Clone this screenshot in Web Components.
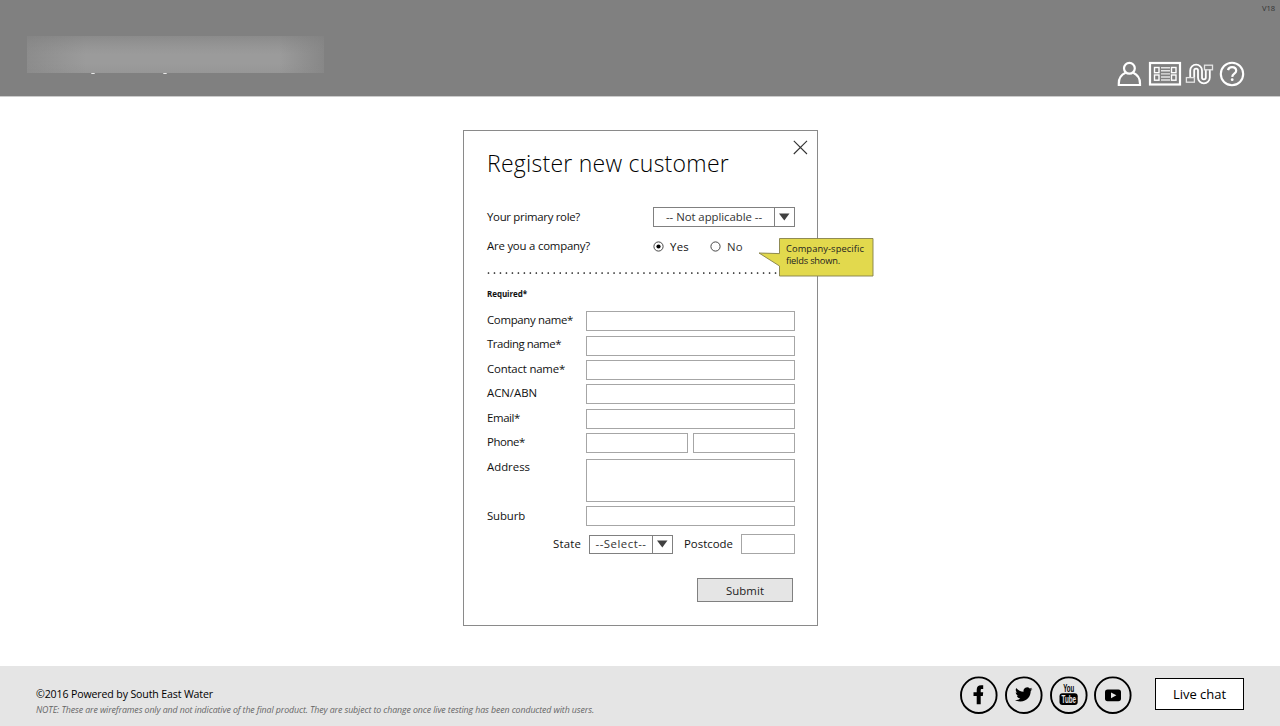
<!DOCTYPE html>
<html lang="en">
<head>
<meta charset="utf-8">
<title>Register new customer</title>
<style>
html,body{margin:0;height:100%;background:#fff}
body{overflow:hidden;font-family:"Open Sans","Noto Sans",sans-serif;font-size:11.4px;color:#111}
</style>
</head>
<body>
<wire-page></wire-page>
<script>
class Base extends HTMLElement{
  connectedCallback(){
    if(this.shadowRoot)return;
    this.attachShadow({mode:"open"}).innerHTML=this.render();
    this.ready&&this.ready();
  }
}
const attr=(el,n,d="")=>el.getAttribute(n)??d;

/* One line of text tracked to a given measure: w = width, s = size, c = colour, b = weight */
customElements.define("fit-text",class extends Base{
  render(){
    return `<style>:host{display:block;white-space:nowrap;width:${attr(this,"w")}px;font-size:${attr(this,"s","11.4")}px;
      color:${attr(this,"c","#111")};font-weight:${attr(this,"b","400")};flex:none}
      span{display:inline-block}</style><span><slot></slot></span>`;
  }
  ready(){
    const s=this.shadowRoot.querySelector("span"),n=this.textContent.length;
    s.style.letterSpacing=((+attr(this,"w")-s.getBoundingClientRect().width)/n)+"px";
  }
});

customElements.define("wire-input",class extends Base{
  render(){return `<style>:host{display:block;box-sizing:border-box;height:${attr(this,"h","20")}px;width:${attr(this,"w","209")}px;
    border:1px solid #a6a6a6;background:#fff;flex:none}</style>`}
});

customElements.define("wire-select",class extends Base{
  render(){return `<style>:host{display:flex;box-sizing:border-box;height:${attr(this,"h","20")}px;width:${attr(this,"w")}px;border:1px solid #808080;background:#fff;flex:none}
    div{flex:1;display:flex;justify-content:center;align-items:center;line-height:18px}
    i{width:19px;border-left:1px solid #808080;display:flex;align-items:center;justify-content:center}</style>
    <div><slot></slot></div><i><svg width="11" height="8"><path d="M0 .5H10.5L5.3 7.5Z" fill="#404040"/></svg></i>`}
});

customElements.define("wire-radio",class extends Base{
  render(){return `<style>:host{display:flex;align-items:center;gap:6px}svg{flex:none}</style>
    <svg width="11" height="11"><circle cx="5.5" cy="5.5" r="4.6" fill="#fff" stroke="#333" stroke-width=".9"/>${this.hasAttribute("checked")?'<circle cx="5.5" cy="5.5" r="2.1" fill="#000"/>':""}</svg><slot></slot>`}
});

customElements.define("form-row",class extends Base{
  render(){return `<style>:host{display:flex;height:${attr(this,"h","20")}px;margin-bottom:${attr(this,"gap","4")}px}
    .l{width:99px;line-height:18px;margin-top:${attr(this,"drop","0")}px;flex:none}.f{display:flex;gap:5px}</style>
    <div class="l"><slot name="label"></slot></div><div class="f"><slot></slot></div>`}
});

customElements.define("note-callout",class extends Base{
  render(){return `<style>:host{display:block;width:116px;height:40px}
    svg{position:absolute;left:0;top:0}
    .t{position:relative;padding:5px 0 0 28px;line-height:12px}</style>
    <svg width="116" height="40"><path d="M21.5 .5H115V38H21.5V28L1 15L21.5 15.6Z" fill="#e2d94d" stroke="#85804a" stroke-width=".9"/></svg>
    <div class="t"><fit-text w="78" s="9.3" c="#222">Company-specific</fit-text><fit-text w="54" s="9.3" c="#222">fields shown.</fit-text></div>`}
});

customElements.define("register-dialog",class extends Base{
  render(){return `<style>
    :host{display:block;position:relative;box-sizing:border-box;width:355px;height:496px;border:1px solid #8a8a8a;background:#fff;padding:0 23px}
    .close{position:absolute;right:9px;top:9px}
    note-callout{position:absolute;left:294px;top:107px}
    .title{padding-top:15px;line-height:35px;height:61px}
    .line{display:flex;align-items:center;justify-content:space-between;height:20px;width:308px}
    .line>fit-text{margin-top:-1.500px}
    .company{margin-top:10px;height:19px}
    .radios{display:flex;gap:21px;width:142px;align-items:center}
    .dots{height:2px;width:291px;margin-top:16px}
    .dots svg{display:block}
    .req{margin-top:13px;line-height:14px;height:24px}
    .place{display:flex;height:20px;align-items:center;margin:8px 0 0 66px;line-height:20px}
    .submit{display:flex;box-sizing:border-box;width:96px;height:24px;margin:24px 0 0 210px;border:1px solid #808080;background:#e5e5e5;align-items:center;justify-content:center}
    </style>
    <svg class="close" width="15" height="15"><path d="M.8 .8L14 14M14 .8L.8 14" stroke="#333" stroke-width="1.1"/></svg>
    <div class="title"><fit-text w="242" s="23" b="300" c="#000">Register new customer</fit-text></div>
    <div class="line"><fit-text w="93">Your primary role?</fit-text>
      <wire-select w="142"><fit-text w="96" c="#333">-- Not applicable --</fit-text></wire-select></div>
    <div class="line company"><fit-text w="103">Are you a company?</fit-text>
      <div class="radios"><wire-radio checked><fit-text w="19">Yes</fit-text></wire-radio><wire-radio><fit-text w="16" c="#333">No</fit-text></wire-radio></div></div>
    <div class="dots"><svg width="291" height="2"><path d="M1.5 1H291" stroke="#111" stroke-width="1.7" stroke-linecap="round" stroke-dasharray="0 5.98"/></svg></div>
    <div class="req"><fit-text w="40" s="8" b="700">Required*</fit-text></div>
    <form-row gap="5"><fit-text slot="label" w="86">Company name*</fit-text><wire-input></wire-input></form-row>
    <form-row drop="-1"><fit-text slot="label" w="74">Trading name*</fit-text><wire-input></wire-input></form-row>
    <form-row><fit-text slot="label" w="78">Contact name*</fit-text><wire-input></wire-input></form-row>
    <form-row gap="5"><fit-text slot="label" w="50">ACN/ABN</fit-text><wire-input></wire-input></form-row>
    <form-row><fit-text slot="label" w="33">Email*</fit-text><wire-input></wire-input></form-row>
    <form-row gap="6"><fit-text slot="label" w="38">Phone*</fit-text><wire-input w="102"></wire-input><wire-input w="102"></wire-input></form-row>
    <form-row h="43" drop="-1"><fit-text slot="label" w="43">Address</fit-text><wire-input h="43"></wire-input></form-row>
    <form-row drop="1"><fit-text slot="label" w="38">Suburb</fit-text><wire-input></wire-input></form-row>
    <div class="place"><fit-text w="28">State</fit-text><wire-select w="84" h="19" style="margin:0 11px 0 8px"><fit-text w="51" c="#333">--Select--</fit-text></wire-select>
      <fit-text w="49">Postcode</fit-text><wire-input w="54" style="margin-left:8px"></wire-input></div>
    <div class="submit"><fit-text w="38" c="#222">Submit</fit-text></div>
    <note-callout></note-callout>`}
});

customElements.define("page-header",class extends Base{
  render(){return `<style>
    :host{display:flex;justify-content:space-between;align-items:flex-start;box-sizing:border-box;height:97px;background:#808080;border-bottom:1px solid #ccc;position:relative}
    .brand{margin:36px 0 0 27px;width:297px;height:38px}
    .brand svg{display:block}
    .ver{position:absolute;right:5px;top:3px;line-height:11px}
    .icons{display:flex;margin:61px 35px 0 0;gap:5px}
    .icons svg{display:block;fill:none;stroke:#fff}</style>
    <div class="brand"><svg width="297" height="38"><defs>
      <linearGradient id="h"><stop offset="0" stop-color="#8c8c8c"/><stop offset=".2" stop-color="#9b9b9b"/><stop offset=".85" stop-color="#9b9b9b"/><stop offset="1" stop-color="#878787"/></linearGradient>
      <linearGradient id="v" x2="0" y2="1"><stop offset="0" stop-color="#808080" stop-opacity=".6"/><stop offset=".5" stop-color="#888" stop-opacity="0"/><stop offset=".75" stop-color="#888" stop-opacity="0"/><stop offset="1" stop-color="#888" stop-opacity=".25"/></linearGradient></defs>
      <rect width="297" height="37" fill="url(#h)"/><rect width="297" height="37" fill="url(#v)"/>
      <path d="M64.3 37.5h3.4M136.3 37.5h3.4" stroke="#e8e8e8"/></svg></div>
    <div class="ver"><fit-text w="13" s="7.6" c="#333">V18</fit-text></div>
    <div class="icons">
      <svg width="26" height="26" stroke-width="2.2"><circle cx="12.4" cy="7.3" r="5.4"/><path d="M8.6 11.8C4 13.8 1.8 17.5 1.8 22.5V24H23V22.5C23 17.5 20.7 13.8 16.2 11.8"/></svg>
      <svg width="34" height="26"><rect x="2" y="2" width="30" height="21.5" stroke-width="2.2"/><g stroke-width="1.4"><rect x="6.5" y="6.5" width="4.5" height="5.2"/><rect x="6.5" y="14" width="4.5" height="5.2"/><rect x="23.5" y="6.5" width="4.5" height="5.2"/><rect x="23.5" y="14" width="4.5" height="5.2"/><path d="M13 6.7H22M13 9.7H22M13 12.9H22M13 16H22M13 19H22" stroke="#e4e4e4"/></g></svg>
      <svg width="29" height="26" style="margin:0 1px 0 -2px"><path d="M5.2 16V9.5a5.9 5.9 0 0 1 11.8 0V16.5a1.9 1.9 0 0 0 3.8 0V8.600M9.200 16V9.500a1.900 1.900 0 0 1 3.800 0V16.500a5.900 5.900 0 0 0 11.800 0V8.600" stroke-width="1.800"/><rect x="1.400" y="16.600" width="8" height="4.600" stroke="#e4e4e4" stroke-width="1.300"/><rect x="19.500" y="4.200" width="8" height="4.600" stroke="#e4e4e4" stroke-width="1.300"/></svg>
      <svg width="26" height="26" style="margin-left:-1px"><circle cx="13" cy="13" r="11.200" stroke-width="2.100"/><path d="M9 9.100C9.500 7.200 11 6.200 13 6.200C15.500 6.200 17.200 7.700 17.200 9.800C17.200 12.800 13.300 12.600 13.200 15.900" stroke-width="2.200"/><circle cx="13.200" cy="18.700" r="1.400" fill="#fff" stroke="none"/></svg>
    </div>`}
});

customElements.define("social-icon",class extends Base{
  render(){
    const art={
      facebook:'<path d="M16.700 28.300V20.100H13.500V16.300H16.700V13.700C16.700 10.700 18.400 9.300 21.100 9.300H23.200V13H21.800C21 13 20.700 13.400 20.700 14.200V16.300H23.200L22.800 20.100H20.700V28.300Z"/>',
      twitter:'<path transform="translate(10 9.700) scale(.73)" d="M23.900 4.600c-.9.400-1.800.7-2.800.8 1-.6 1.800-1.600 2.200-2.700-1 .6-2 1-3.100 1.200A4.900 4.900 0 0 0 11.800 8.400C7.700 8.200 4.100 6.200 1.700 3.200.4 5.400 1 8.300 3.200 9.700 2.400 9.700 1.600 9.500 1 9.100c0 2.300 1.600 4.400 3.900 4.900-.7.2-1.500.2-2.200.1.600 2 2.400 3.400 4.600 3.400A9.900 9.900 0 0 1 0 19.500 14 14 0 0 0 7.500 21.700c9.100 0 14.300-7.700 14-14.600 1-.7 1.800-1.600 2.400-2.500z"/>',
      youtube:'<rect x="9.500" y="17.200" width="18.200" height="11.800" rx="3"/><text transform="translate(13.200 16) scale(.58 1)" font-size="10.500">You</text><text transform="translate(11.500 27) scale(.62 1)" font-size="10.200" fill="#e5e5e5">Tube</text>',
      play:'<rect x="11" y="13.500" width="16" height="11.700" rx="2.600"/><path d="M17 16.500L22.400 19.300L17 22.200Z" fill="#e5e5e5"/>'};
    return `<style>:host,svg{display:block}text{font-family:"Liberation Sans",sans-serif;font-weight:700}</style>
    <svg width="38" height="38"><circle cx="18.800" cy="19.200" r="17.800" fill="none" stroke="#000" stroke-width="1.900"/>${art[attr(this,"kind")]}</svg>`}
});

customElements.define("page-footer",class extends Base{
  render(){return `<style>
    :host{display:flex;justify-content:space-between;box-sizing:border-box;height:60px;padding:0 36px;background:#e5e5e5}
    .copy{padding-top:20px}.copy fit-text:first-child{line-height:17.5px}.copy fit-text+fit-text{font-style:italic;line-height:12px}
    .right{display:flex;padding-top:10px}.soc{display:flex;gap:6.8px}
    .chat{display:flex;box-sizing:border-box;width:89px;height:32px;margin:2px 0 0 22.6px;border:1px solid #000;background:#fff;align-items:center;justify-content:center}</style>
    <div class="copy"><fit-text w="177" s="10.6" c="#000">©2016 Powered by South East Water</fit-text>
    <fit-text w="558" s="8.8" c="#666">NOTE: These are wireframes only and not indicative of the final product. They are subject to change once live testing has been conducted with users.</fit-text></div>
    <div class="right"><div class="soc"><social-icon kind="facebook"></social-icon><social-icon kind="twitter"></social-icon><social-icon kind="youtube"></social-icon><social-icon kind="play"></social-icon></div>
    <div class="chat"><fit-text w="53" s="13" c="#000">Live chat</fit-text></div></div>`}
});

customElements.define("wire-page",class extends Base{
  render(){return `<style>:host{display:flex;flex-direction:column;height:726px}
    main{flex:1;display:flex;justify-content:center;align-items:flex-start;padding:33px 0 0 1px}</style>
    <page-header></page-header><main><register-dialog></register-dialog></main><page-footer></page-footer>`}
});
</script>
</body>
</html>
